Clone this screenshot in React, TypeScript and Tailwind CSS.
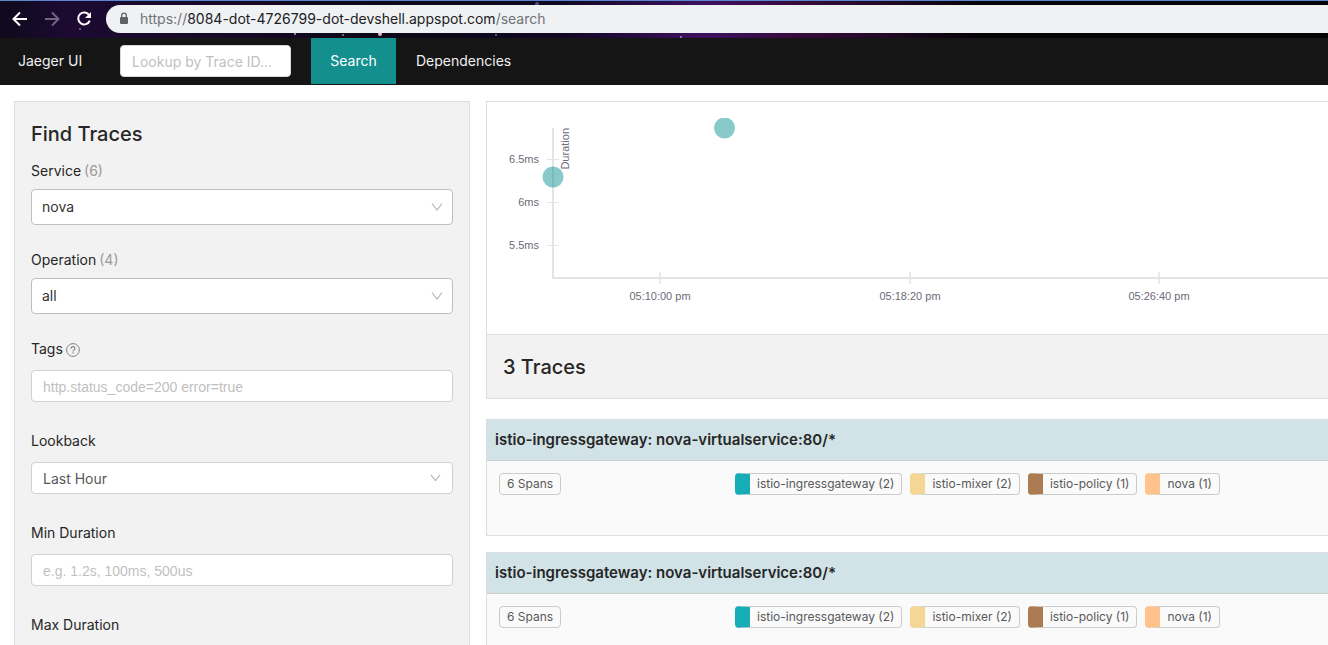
import type { ReactNode } from "react";
import { clsx } from "clsx";

const CHIPS = [
  { name: "istio-ingressgateway", count: 2, color: "border-l-[#17adb5]" },
  { name: "istio-mixer", count: 2, color: "border-l-[#f6d694]" },
  { name: "istio-policy", count: 1, color: "border-l-[#ad7b51]" },
  { name: "nova", count: 1, color: "border-l-[#ffc28c]" },
];

const TIME_TICKS = [
  { x: 173, label: "05:10:00 pm" },
  { x: 423, label: "05:18:20 pm" },
  { x: 672, label: "05:26:40 pm" },
];

const DURATION_TICKS = [
  { y: 41, label: "6.5ms" },
  { y: 84, label: "6ms" },
  { y: 127, label: "5.5ms" },
];

const STARS = [
  { x: 80, y: 28, r: 1, fill: "#7f6a9c" },
  { x: 295, y: 33, r: 1, fill: "#b9a4dd" },
  { x: 343, y: 34, r: 1, fill: "#8886a8" },
  { x: 380, y: 33, r: 2, fill: "#eab6cb" },
  { x: 496, y: 34, r: 1, fill: "#6d7096" },
  { x: 537, y: 3, r: 2, fill: "#4c4f83" },
  { x: 681, y: 36, r: 1, fill: "#b07be0" },
];

function BrowserBar() {
  return (
    <div className="relative flex h-[38px] shrink-0 items-center border-t border-[#5b87cf] bg-[linear-gradient(90deg,#0e0a1c_0%,#1c0a32_5%,#190a2c_12%,#0d0818_28%,#0f0820_42%,#3d1060_53%,#360b3a_60%,#240a28_66%,#040305_74%,#030305_100%)] pb-px">
      <svg className="absolute inset-0 h-full w-full" aria-hidden="true">
        {STARS.map((s) => (
          <circle key={s.x} cx={s.x} cy={s.y} r={s.r} fill={s.fill} />
        ))}
      </svg>
      <div className="relative flex flex-1 items-center">
        <div className="flex w-[106px] shrink-0 items-center gap-4 pl-3">
          <button aria-label="Back" className="text-white">
            <svg width="16" height="16" viewBox="0 0 16 16" fill="none" stroke="currentColor" strokeWidth="2">
              <path d="M15 8H2.5M8 1.500 1.500 8 8 14.500" />
            </svg>
          </button>
          <button aria-label="Forward" className="text-[#74647f]">
            <svg width="16" height="16" viewBox="0 0 16 16" fill="none" stroke="currentColor" strokeWidth="2">
              <path d="M1 8h12.500M8 1.500 14.500 8 8 14.500" />
            </svg>
          </button>
          <button aria-label="Reload" className="text-white">
            <svg width="16" height="16" viewBox="0 0 16 16" fill="none">
              <path d="M13.300 4.200A6 6 0 1 0 13.800 9.600" stroke="currentColor" strokeWidth="2" />
              <path d="M15 1v6H9z" fill="currentColor" />
            </svg>
          </button>
        </div>
        <div className="flex h-7 flex-1 items-center gap-[10px] rounded-l-full bg-[#eff1f3] pl-3">
          <svg width="12" height="14" viewBox="0 0 12 14" fill="none" aria-hidden="true">
            <rect x="2" y="5" width="8" height="7" rx="1" fill="#5f6368" />
            <path d="M3.700 6V3.500a2.300 2.300 0 0 1 4.600 0V6" stroke="#5f6368" strokeWidth="1.300" />
          </svg>
          <p className="text-sm whitespace-nowrap text-[#6f7378]">
            https://<span className="text-[#202124]">8084-dot-4726799-dot-devshell.appspot.com</span>/search
          </p>
        </div>
      </div>
    </div>
  );
}

function NavBar() {
  return (
    <nav className="flex h-[47px] shrink-0 items-center bg-[#151515] pb-px text-sm text-[#f0f0f0]">
      <a href="#home" className="w-[120px] pl-[18px]">
        Jaeger UI
      </a>
      <input
        aria-label="Lookup by Trace ID"
        placeholder="Lookup by Trace ID..."
        className="mr-5 h-8 w-[171px] rounded border border-[#d9d9d9] bg-white px-[11px] placeholder:text-[#bfbfbf]"
      />
      <a href="#search" className="flex h-[46px] w-[85px] items-center justify-center bg-[#138f8e] text-white">
        Search
      </a>
      <a href="#dependencies" className="px-5">
        Dependencies
      </a>
    </nav>
  );
}

function Chevron({ small }: { small?: boolean }) {
  return (
    <svg
      className={clsx("pointer-events-none absolute top-1/2 -translate-y-1/2", small ? "right-3" : "right-[10px]")}
      width={small ? 11 : 12}
      height={small ? 9 : 10}
      viewBox="0 0 12 10"
      fill="none"
      stroke="#b5b5b5"
      strokeWidth="1.200"
      aria-hidden="true"
    >
      <path d="M1 1.500 6 8l5-6.500" />
    </svg>
  );
}

function Label({ id, children }: { id: string; children: ReactNode }) {
  return (
    <label htmlFor={id} className="flex h-5 items-center gap-[3px] text-sm text-[#262626]">
      {children}
    </label>
  );
}

function SelectField({ id, label, count, value }: { id: string; label: string; count: number; value: string }) {
  return (
    <div className="mb-[25px]">
      <Label id={id}>
        {label} <span className="text-[#999]">({count})</span>
      </Label>
      <div className="relative mt-2">
        <select id={id} className="h-9 w-full appearance-none rounded border border-[#bfbfbf] bg-white px-[10px] text-sm text-[#333]">
          <option>{value}</option>
        </select>
        <Chevron />
      </div>
    </div>
  );
}

function TextField({ id, label, placeholder, help }: { id: string; label: string; placeholder?: string; help?: boolean }) {
  return (
    <div className="mb-[29px]">
      <Label id={id}>
        {label}
        {help && (
          <svg width="14" height="16" viewBox="0 0 14 16" fill="none" stroke="#858585" aria-hidden="true">
            <circle cx="7" cy="9" r="6.400" />
            <path d="M5.100 7.700a1.900 1.900 0 1 1 2.700 1.600c-.6.300-.8.500-.8 1.100M7 11.300v1.300" strokeWidth="1.200" />
          </svg>
        )}
      </Label>
      <input
        id={id}
        placeholder={placeholder}
        className="mt-[11px] block h-8 w-full rounded border border-[#d0d0d0] bg-white px-[11px] pt-px font-['Liberation_Sans',sans-serif] text-sm placeholder:text-[#bfbfbf]"
      />
    </div>
  );
}

function SearchForm() {
  return (
    <form className="w-[456px] shrink-0 border border-[#dddddd] bg-[#f2f2f2] px-4 pt-[18px]">
      <h2 className="mb-[13px] text-xl leading-7 font-medium text-[#262626]">Find Traces</h2>
      <SelectField id="service" label="Service" count={6} value="nova" />
      <SelectField id="operation" label="Operation" count={4} value="all" />
      <TextField id="tags" label="Tags" placeholder="http.status_code=200 error=true" help />
      <div className="mb-[29px]">
        <Label id="lookback">Lookback</Label>
        <div className="relative mt-[11px]">
          <select id="lookback" className="block h-8 w-full appearance-none rounded border border-[#d0d0d0] bg-white px-[11px] pt-px text-sm text-[#595959]">
            <option>Last Hour</option>
          </select>
          <Chevron small />
        </div>
      </div>
      <TextField id="min-duration" label="Min Duration" placeholder="e.g. 1.2s, 100ms, 500us" />
      <TextField id="max-duration" label="Max Duration" />
    </form>
  );
}

function ScatterPlot() {
  return (
    <div className="pt-4">
      <svg className="block h-[216px] w-full font-['Liberation_Sans',sans-serif] text-[11px]" role="img" aria-label="Trace durations">
        <g stroke="#e3e3e8">
          {DURATION_TICKS.map((t) => (
            <line key={t.y} x1="60" x2="72" y1={t.y + 0.5} y2={t.y + 0.5} />
          ))}
          {TIME_TICKS.map((t) => (
            <line key={t.x} x1={t.x} x2={t.x} y1="154" y2="166" strokeWidth="1.500" />
          ))}
          <line x1="66" x2="66" y1="10" y2="161" strokeWidth="2" />
          <line x1="66" x2="100%" y1="160" y2="160" strokeWidth="2" />
        </g>
        <g fill="#6b6b76">
          {DURATION_TICKS.map((t) => (
            <text key={t.y} x="52" y={t.y + 4} textAnchor="end">
              {t.label}
            </text>
          ))}
          {TIME_TICKS.map((t) => (
            <text key={t.x} x={t.x} y="182" textAnchor="middle">
              {t.label}
            </text>
          ))}
          <text transform="translate(82 10) rotate(-90)" textAnchor="end">
            Duration
          </text>
        </g>
        <g fill="#12939a" fillOpacity="0.5">
          <circle cx="66" cy="59" r="10.500" />
          <circle cx="237.500" cy="10" r="10.500" />
        </g>
      </svg>
    </div>
  );
}

function TraceCard() {
  return (
    <article className="mb-4 h-[117px] border border-r-0 border-[#dddddd] bg-[#fafafa]">
      <h3 className="flex h-[41px] items-center border-b border-[#cccccc] bg-[#d1e3e7] px-2 text-[15px] font-semibold text-[#262626]">
        istio-ingressgateway: nova-virtualservice:80/*
      </h3>
      <div className="flex px-3 pt-3 text-xs text-[#595959]">
        <div className="w-[236px] shrink-0">
          <span className="inline-flex h-[22px] items-center rounded border border-[#cccccc] px-[7px]">6 Spans</span>
        </div>
        <ul className="flex gap-2 whitespace-nowrap">
          {CHIPS.map((c) => (
            <li key={c.name} className={clsx("flex h-[22px] items-center rounded border border-l-[15px] border-[#cccccc] px-[7px]", c.color)}>
              {c.name} ({c.count})
            </li>
          ))}
        </ul>
      </div>
    </article>
  );
}

export default function App() {
  return (
    <div className="flex h-screen flex-col overflow-hidden bg-white font-[Inter,sans-serif]">
      <BrowserBar />
      <NavBar />
      <div className="flex flex-1 items-start gap-4 pt-4 pl-[14px]">
        <SearchForm />
        <main className="min-w-0 flex-1">
          <section className="mb-5 border border-r-0 border-[#dddddd]">
            <ScatterPlot />
            <h2 className="flex h-16 items-center border-t border-[#dddddd] bg-[#f2f2f2] px-4 text-xl font-medium text-[#262626]">3 Traces</h2>
          </section>
          <TraceCard />
          <TraceCard />
        </main>
      </div>
    </div>
  );
}
